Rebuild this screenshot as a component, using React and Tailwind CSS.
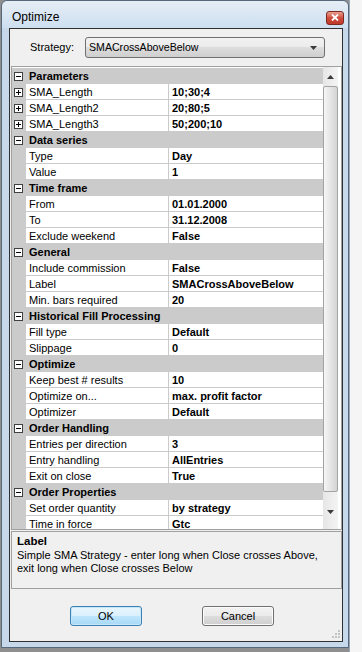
import React from "react";

const groups = [
  {
    title: "Parameters",
    rows: [
      ["SMA_Length", "10;30;4", true],
      ["SMA_Length2", "20;80;5", true],
      ["SMA_Length3", "50;200;10", true],
    ],
  },
  { title: "Data series", rows: [["Type", "Day"], ["Value", "1"]] },
  {
    title: "Time frame",
    rows: [
      ["From", "01.01.2000"],
      ["To", "31.12.2008"],
      ["Exclude weekend", "False"],
    ],
  },
  {
    title: "General",
    rows: [
      ["Include commission", "False"],
      ["Label", "SMACrossAboveBelow"],
      ["Min. bars required", "20"],
    ],
  },
  {
    title: "Historical Fill Processing",
    rows: [["Fill type", "Default"], ["Slippage", "0"]],
  },
  {
    title: "Optimize",
    rows: [
      ["Keep best # results", "10"],
      ["Optimize on...", "max. profit factor"],
      ["Optimizer", "Default"],
    ],
  },
  {
    title: "Order Handling",
    rows: [
      ["Entries per direction", "3"],
      ["Entry handling", "AllEntries"],
      ["Exit on close", "True"],
    ],
  },
  {
    title: "Order Properties",
    rows: [["Set order quantity", "by strategy"], ["Time in force", "Gtc"]],
  },
];

function Box({ plus }) {
  return (
    <svg width="9" height="9" viewBox="0 0 9 9">
      <rect x="0.5" y="0.5" width="8" height="8" fill="#fff" stroke="#404040" />
      <line x1="2" y1="4.5" x2="7" y2="4.5" stroke="#000" />
      {plus && <line x1="4.5" y1="2" x2="4.5" y2="7" stroke="#000" />}
    </svg>
  );
}

function Arrow({ up }) {
  return (
    <svg width="7" height="4" viewBox="0 0 7 4">
      <path d={up ? "M0 4 L3.5 0 L7 4 Z" : "M0 0 L7 0 L3.5 4 Z"} fill="#3a3a3a" />
    </svg>
  );
}

export default function App() {
  return (
    <div className="w-[362px] h-[652px] bg-[#8f8f8f] flex overflow-hidden font-['Liberation_Sans',Arial,sans-serif] text-[11px] text-black">
      {/* window */}
      <div className="ml-[1px] w-[348px] h-[648px] shrink-0 flex flex-col border border-[#55687c] rounded-t-[6px] bg-[#c6d8ea]">
        {/* title bar */}
        <div className="h-[27px] shrink-0 flex items-center justify-between pl-[10px] pr-[4px] rounded-t-[6px] bg-gradient-to-b from-[#e6eef6] to-[#cddff0]">
          <span className="text-[12px] pt-[4px]">Optimize</span>
          <div className="w-[18px] h-[14px] mt-[6px] rounded-[3px] border border-[#7d2a22] bg-gradient-to-b from-[#e8a090] via-[#cf4b3a] to-[#c0392b] flex items-center justify-center">
            <svg width="8" height="7" viewBox="0 0 8 7">
              <path d="M1 0.5 L7 6.5 M7 0.5 L1 6.5" stroke="#fff" strokeWidth="1.8" />
            </svg>
          </div>
        </div>
        {/* client */}
        <div className="mr-[5px] ml-[7px] flex-1 flex flex-col bg-[#f0f0f0] border border-[#303030] pl-[1px] mb-[5px]">
          {/* strategy */}
          <div className="flex items-center mt-[8px] h-[21px] shrink-0">
            <span className="ml-[19px] w-[55px]">Strategy:</span>
            <div className="w-[240px] h-[21px] rounded-[3px] border border-[#707070] flex items-center justify-between pl-[3px] pr-[7px] bg-[linear-gradient(#f2f2f2_0%,#ebebeb_50%,#dddddd_50%,#cfcfcf_100%)]">
              <span className="text-[10.6px]">SMACrossAboveBelow</span>
              <Arrow />
            </div>
          </div>
          {/* property grid */}
          <div className="mt-[8px] h-[464px] shrink-0 border border-[#a0a0a0] bg-white flex">
            <div className="w-[311px] pt-[1px] flex flex-col overflow-hidden">
              {groups.map((g) => (
                <React.Fragment key={g.title}>
                  <div className="flex h-[16px] shrink-0 bg-[#cbcbcb] items-center">
                    <div className="w-[14px] pl-[2px] flex items-center">
                      <Box />
                    </div>
                    <span className="pl-[3px] pt-[1px] font-bold leading-[15px]">{g.title}</span>
                  </div>
                  {g.rows.map(([n, v, exp]) => (
                    <div key={n} className="flex h-[16px] shrink-0">
                      <div className="w-[14px] bg-[#cbcbcb] pl-[2px] flex items-center">
                        {exp && <Box plus />}
                      </div>
                      <div className="w-[142px] bg-white border-b border-[#cbcbcb] pl-[3px] leading-[17px] whitespace-nowrap overflow-hidden">
                        {n}
                      </div>
                      <div className="flex-1 bg-white border-b border-l border-[#cbcbcb] pl-[3px] font-bold leading-[17px] whitespace-nowrap overflow-hidden">
                        {v}
                      </div>
                    </div>
                  ))}
                </React.Fragment>
              ))}
            </div>
            {/* scrollbar */}
            <div className="w-[15px] pt-[1px] flex flex-col bg-gradient-to-r from-[#e6e6e6] to-[#f4f4f4]">
              <div className="h-[17px] flex items-center justify-center">
                <Arrow up />
              </div>
              <div className="h-[406px] mt-[1px] rounded-[2px] border border-[#a3a3a3] bg-gradient-to-r from-[#f6f6f6] to-[#d4d4d4]" />
              <div className="flex-1 flex items-center justify-center pt-[2px]">
                <Arrow />
              </div>
            </div>
            <div className="flex-1 bg-white" />
          </div>
          {/* description */}
          <div className="mt-[1px] h-[58px] shrink-0 border border-[#a0a0a0] bg-[#f0f0f0] pl-[5px] pt-[2px] leading-[13px]">
            <div className="font-bold text-[11.5px] leading-[15px]">Label</div>
            <div className="whitespace-nowrap">
              Simple SMA Strategy - enter long when Close crosses Above,
              <br />
              exit long when Close crosses Below
            </div>
          </div>
          {/* buttons */}
          <div className="mt-[17px] flex pl-[59px] gap-[60px] shrink-0">
            <div className="w-[72px] h-[20px] rounded-[3px] border border-[#3c7fb1] flex items-center justify-center bg-[linear-gradient(#eaf6fd_0%,#d9f0fc_50%,#bee6fd_50%,#a7d9f5_100%)] shadow-[inset_0_0_0_1px_#c6e7fa]">
              OK
            </div>
            <div className="w-[72px] h-[20px] rounded-[3px] border border-[#707070] flex items-center justify-center bg-[linear-gradient(#f2f2f2_0%,#ebebeb_50%,#dddddd_50%,#cfcfcf_100%)] shadow-[inset_0_0_0_1px_#fbfbfb]">
              Cancel
            </div>
          </div>
          <div className="flex-1 flex items-end justify-end pr-[2px] pb-[2px]">
            <svg width="10" height="10" viewBox="0 0 10 10">
              {[
                [8, 0],
                [8, 3],
                [5, 3],
                [8, 6],
                [5, 6],
                [2, 6],
              ].map(([x, y]) => (
                <rect key={x + "-" + y} x={x} y={y + 1} width="2" height="2" fill="#c4c4c4" />
              ))}
            </svg>
          </div>
        </div>
      </div>
      <div className="flex-1 bg-[#f5f5f5] border-l border-[#9aa7b4]" />
    </div>
  );
}
